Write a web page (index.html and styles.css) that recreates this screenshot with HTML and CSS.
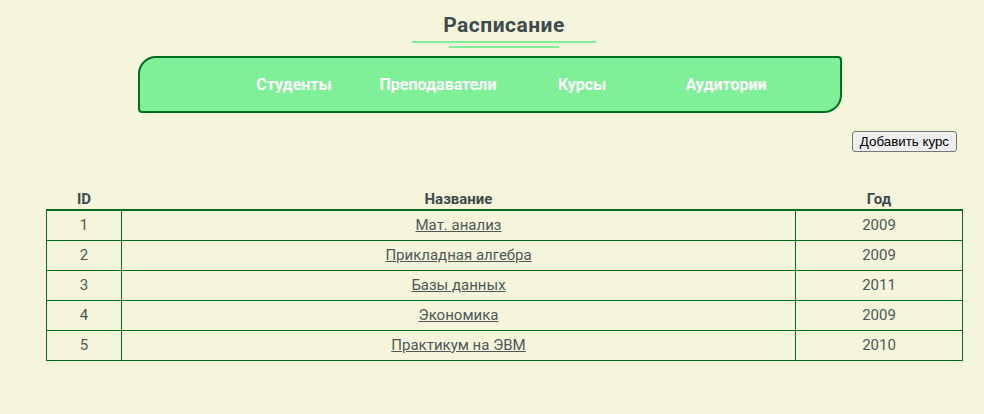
FILE: index.html
```html
<!DOCTYPE html>
<html lang="ru">
<head>
<meta charset="utf-8">
<title>Расписание</title>
<link rel="stylesheet" href="styles.css">
</head>
<body>
<header class="top">
  <h1 class="title">Расписание</h1>
  <div class="rule rule-long"></div>
  <div class="rule rule-short"></div>
</header>
<nav class="nav">
  <ul class="nav-list">
    <li><a href="#">Студенты</a></li>
    <li><a href="#">Преподаватели</a></li>
    <li><a href="#">Курсы</a></li>
    <li><a href="#">Аудитории</a></li>
  </ul>
</nav>
<div class="actions">
  <button class="btn" type="button">Добавить курс</button>
</div>
<table class="courses">
  <thead>
    <tr><th class="c-id">ID</th><th class="c-name">Название</th><th class="c-year">Год</th></tr>
  </thead>
  <tbody>
    <tr><td>1</td><td><a href="#">Мат. анализ</a></td><td>2009</td></tr>
    <tr><td>2</td><td><a href="#">Прикладная алгебра</a></td><td>2009</td></tr>
    <tr><td>3</td><td><a href="#">Базы данных</a></td><td>2011</td></tr>
    <tr><td>4</td><td><a href="#">Экономика</a></td><td>2009</td></tr>
    <tr><td>5</td><td><a href="#">Практикум на ЭВМ</a></td><td>2010</td></tr>
  </tbody>
</table>
</body>
</html>
```

FILE: styles.css
```css
html, body {
  margin: 0;
  padding: 0;
  background: #f5f5dc;
}
body {
  font-family: Roboto, "Liberation Sans", sans-serif;
  color: #4e5858;
}
.top {
  display: flex;
  flex-direction: column;
  align-items: center;
  padding-left: 24px;
  padding-top: 13px;
}
.title {
  margin: 0;
  font-size: 21px;
  line-height: 24px;
  font-weight: 700;
  letter-spacing: 0.5px;
  color: #3d4a4c;
}
.rule {
  height: 2px;
  background: #80ee98;
}
.rule-long {
  width: 184px;
  margin-top: 4px;
}
.rule-short {
  width: 110px;
  margin-top: 3px;
}
.nav {
  margin: 8px 0 0 138px;
  width: 700px;
  height: 53px;
  background: #80f098;
  border: 2px solid #00701e;
  border-radius: 18px 4px 18px 4px;
}
.nav-list {
  list-style: none;
  margin: 0;
  padding: 0 0 0 40px;
  height: 100%;
  display: flex;
  justify-content: center;
  align-items: center;
}
.nav-list li {
  width: 144px;
  text-align: center;
}
.nav-list a {
  color: #ffffff;
  text-decoration: none;
  font-weight: 700;
  font-size: 16px;
}
.actions {
  display: flex;
  justify-content: flex-end;
  margin: 18px 27px 0 0;
}
.btn {
  font-family: "Liberation Sans", Arial, sans-serif;
  font-size: 13.33px;
  height: 21px;
  padding: 0 7px;
  color: #000;
  background: #efefef;
  border: 1px solid #767676;
  border-radius: 3px;
}
.courses {
  margin: 36px 0 0 46px;
  width: 917px;
  border-collapse: collapse;
  font-size: 15px;
}
.courses th {
  font-weight: 700;
  color: #3d4a4c;
  height: 21px;
  padding: 0;
  vertical-align: middle;
  border-bottom: 2px solid #00701e;
}
.courses td {
  height: 27px;
  padding: 0 0 2px 0;
  text-align: center;
  border: 1px solid #00701e;
  color: #4e5858;
}
.courses td a {
  color: #4e5858;
}
.c-id { width: 75px; }
.c-year { width: 167px; }
```
